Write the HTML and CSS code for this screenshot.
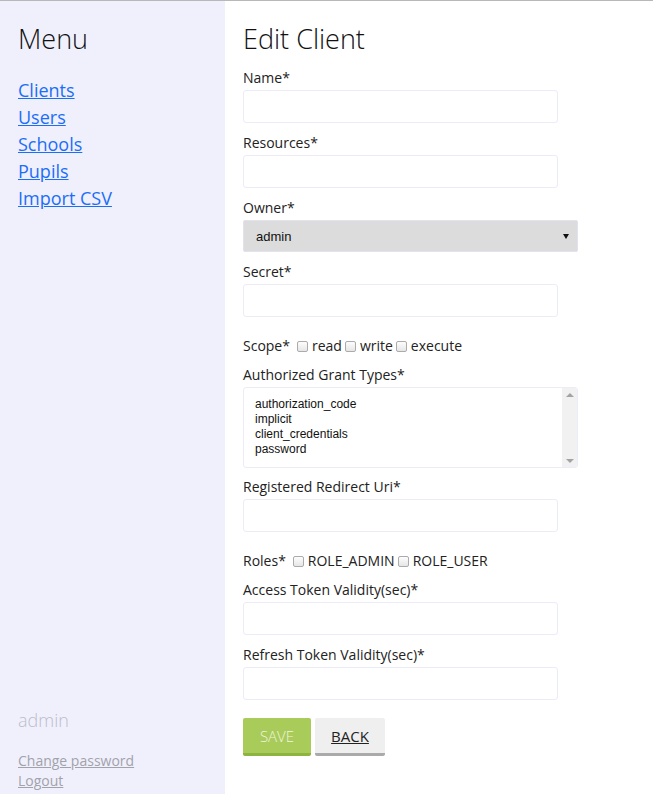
FILE: index.html
```html
<!DOCTYPE html>
<html>
<head>
<meta charset="utf-8">
<link rel="stylesheet" href="styles.css">
</head>
<body>
<div class="layout">
  <aside class="sidebar">
    <h1 class="title">Menu</h1>
    <nav class="nav">
      <a href="#">Clients</a>
      <a href="#">Users</a>
      <a href="#">Schools</a>
      <a href="#">Pupils</a>
      <a href="#">Import CSV</a>
    </nav>
    <div class="side-foot">
      <div class="user">admin</div>
      <a href="#" class="foot-link">Change password</a>
      <a href="#" class="foot-link">Logout</a>
    </div>
  </aside>
  <main class="main">
    <h1 class="title">Edit Client</h1>
    <form class="form">
      <div class="field">
        <label class="label">Name*</label>
        <input class="input" type="text">
      </div>
      <div class="field">
        <label class="label">Resources*</label>
        <input class="input" type="text">
      </div>
      <div class="field">
        <label class="label">Owner*</label>
        <div class="select"><span>admin</span><span class="caret"></span></div>
      </div>
      <div class="field">
        <label class="label">Secret*</label>
        <input class="input" type="text">
      </div>
      <div class="check-row">
        <span class="row-label">Scope*</span>
        <span class="cb cb-first"></span><span>read</span>
        <span class="cb"></span><span>write</span>
        <span class="cb"></span><span>execute</span>
      </div>
      <div class="field field-list">
        <label class="label">Authorized Grant Types*</label>
        <div class="listbox">
          <div class="options">
            <div>authorization_code</div>
            <div>implicit</div>
            <div>client_credentials</div>
            <div>password</div>
          </div>
          <div class="scrollbar"><span class="arr-up"></span><span class="arr-down"></span></div>
        </div>
      </div>
      <div class="field">
        <label class="label">Registered Redirect Uri*</label>
        <input class="input" type="text">
      </div>
      <div class="check-row">
        <span class="row-label">Roles*</span>
        <span class="cb cb-first"></span><span>ROLE_ADMIN</span>
        <span class="cb"></span><span>ROLE_USER</span>
      </div>
      <div class="field">
        <label class="label">Access Token Validity(sec)*</label>
        <input class="input" type="text">
      </div>
      <div class="field">
        <label class="label">Refresh Token Validity(sec)*</label>
        <input class="input" type="text">
      </div>
      <div class="buttons">
        <button type="button" class="btn btn-save">SAVE</button>
        <button type="button" class="btn btn-back">BACK</button>
      </div>
    </form>
  </main>
</div>
</body>
</html>
```
FILE: styles.css
```css
html, body {
  margin: 0;
  padding: 0;
}
body {
  border-top: 1px solid #b8b8b8;
  font-family: "Open Sans", sans-serif;
  color: #222;
  background: #fff;
}
.layout {
  display: flex;
  height: 793px;
}
.sidebar {
  width: 225px;
  box-sizing: border-box;
  background: #f0f0fd;
  padding: 20px 0 3px 18px;
  display: flex;
  flex-direction: column;
}
.title {
  margin: 0;
  font-size: 27px;
  font-weight: 300;
  line-height: 36px;
  color: #111;
}
.nav {
  display: flex;
  flex-direction: column;
  margin-top: 20px;
}
.nav a {
  color: #1a6ef7;
  font-size: 18px;
  line-height: 27px;
  text-decoration: underline;
  align-self: flex-start;
}
.side-foot {
  margin-top: auto;
  display: flex;
  flex-direction: column;
}
.user {
  font-size: 18px;
  font-weight: 300;
  color: #bdbdca;
  line-height: 24px;
  margin-bottom: 19px;
}
.foot-link {
  color: #a2a2aa;
  font-size: 14px;
  line-height: 20px;
  align-self: flex-start;
}
.main {
  flex: 1;
  padding: 20px 0 0 18px;
}
.form {
  margin-top: 10px;
  width: 335px;
}
.field {
  display: flex;
  flex-direction: column;
  margin-bottom: 9px;
}
.field-list {
  margin-bottom: 8px;
}
.label {
  font-size: 14px;
  line-height: 21px;
  margin-bottom: 2px;
  color: #222;
}
.input {
  width: 315px;
  height: 33px;
  box-sizing: border-box;
  border: 1px solid #ececf8;
  border-radius: 3px;
  background: #fff;
  margin: 0;
}
.select {
  width: 335px;
  height: 32px;
  box-sizing: border-box;
  background: #dcdcdc;
  border: 1px solid #e2e2ee;
  border-radius: 2px;
  display: flex;
  align-items: center;
  justify-content: space-between;
  padding: 0 8px 0 12px;
  font-family: "Liberation Sans", Arial, sans-serif;
  font-size: 13px;
  color: #111;
}
.caret {
  width: 0;
  height: 0;
  border-left: 3px solid transparent;
  border-right: 3px solid transparent;
  border-top: 5px solid #111;
}
.check-row {
  display: flex;
  align-items: center;
  font-size: 14px;
  line-height: 20px;
  margin-top: 19px;
  margin-bottom: 8px;
}
.row-label {
  margin-right: 7px;
}
.cb {
  width: 9px;
  height: 9px;
  border: 1px solid #ababab;
  border-radius: 2px;
  background: linear-gradient(#fdfdfd, #e6e6e6);
  margin: 0 4px 0 3px;
}
.cb-first {
  margin-left: 0;
}
.listbox {
  width: 335px;
  height: 81px;
  box-sizing: border-box;
  border: 1px solid #ececf8;
  border-radius: 3px;
  display: flex;
  background: #fff;
  overflow: hidden;
}
.options {
  flex: 1;
  padding: 9px 0 0 11px;
  font-family: "Liberation Sans", Arial, sans-serif;
  font-size: 12px;
  line-height: 15px;
  color: #111;
}
.scrollbar {
  width: 15px;
  background: #f1f1f1;
  display: flex;
  flex-direction: column;
  justify-content: space-between;
  align-items: center;
  padding: 5px 0 4px;
}
.arr-up {
  width: 0;
  height: 0;
  border-left: 4px solid transparent;
  border-right: 4px solid transparent;
  border-bottom: 4px solid #a3a3a3;
}
.arr-down {
  width: 0;
  height: 0;
  border-left: 4px solid transparent;
  border-right: 4px solid transparent;
  border-top: 4px solid #a3a3a3;
}
.buttons {
  display: flex;
  gap: 4px;
  margin-top: 18px;
}
.btn {
  height: 38px;
  box-sizing: border-box;
  border: none;
  border-radius: 2px;
  font-family: "Open Sans", sans-serif;
  font-size: 15px;
  font-weight: 300;
  padding: 0;
  margin: 0;
}
.btn-save {
  width: 68px;
  background: #a8cb5a;
  border-bottom: 3px solid #8db43e;
  color: #eff6df;
}
.btn-back {
  width: 70px;
  background: #efefef;
  border-bottom: 3px solid #aaaaaa;
  color: #222;
  font-weight: 400;
  text-decoration: underline;
}
```
